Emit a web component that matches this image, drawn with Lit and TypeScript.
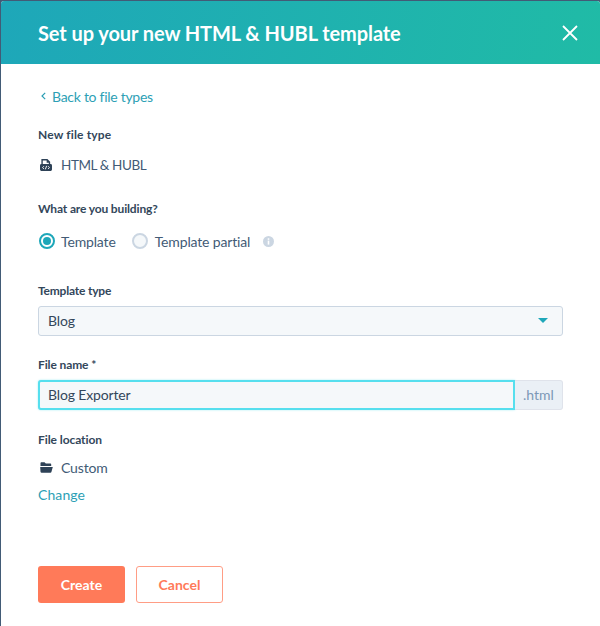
import { LitElement, html, css } from "lit";
import { customElement } from "lit/decorators.js";

@customElement("app-root")
export class AppRoot extends LitElement {
  static styles = css`
    :host { display: block; width: 600px; height: 626px; background: #425b76; font-family: Lato, "Open Sans", sans-serif; color: #33475b; overflow: hidden; }
    * { box-sizing: border-box; }
    .modal { margin: 1px 0 0 1px; height: 625px; background: #fff; border-radius: 3px 3px 0 0; display: flex; flex-direction: column; overflow: hidden; }
    .head { height: 63px; flex: none; background: linear-gradient(100deg, #1ea7b9 0%, #20bba6 100%); display: flex; align-items: center; justify-content: space-between; padding: 0 22px 0 37px; color: #fff; }
    h1 { margin: 0; font-size: 20px; font-weight: 700; line-height: 26px; letter-spacing: -0.08px; }
    .close { display: block; }
    .body { padding: 0 37px; display: flex; flex-direction: column; flex: 1; }
    .back { margin-top: 22px; height: 20px; display: flex; align-items: center; gap: 6px; color: #2d9fb5; font-size: 14px; letter-spacing: -0.28px; padding-left: 3px; }
    .label { font-size: 12px; font-weight: 700; line-height: 16px; color: #33475b; }
    .l1 { margin-top: 21px; letter-spacing: 0.15px; }
    .icon-row { display: flex; align-items: center; height: 20px; font-size: 14px; letter-spacing: -0.15px; color: #425b76; padding-left: 2px; }
    .r1 { margin-top: 12px; gap: 9px; }
    .r1 span { font-size: 13.5px; letter-spacing: -0.4px; }
    .l2 { margin-top: 26px; letter-spacing: -0.15px; }
    .radios { margin-top: 14px; height: 20px; display: flex; align-items: center; font-size: 14px; letter-spacing: -0.15px; color: #425b76; }
    .radio { width: 16px; height: 16px; border-radius: 50%; border: 2px solid #cbd6e2; background: #f5f8fa; margin-right: 7px; display: flex; align-items: center; justify-content: center; flex: none; }
    .radio.on { border-color: #1ea7b9; background: #fff; margin-left: 1px; margin-right: 6px; }
    .radio.on::after { content: ""; width: 8px; height: 8px; border-radius: 50%; background: #1ea7b9; }
    .second { margin-left: 16px; }
    .info { margin-left: 13px; display: block; }
    .l3 { margin-top: 32px; letter-spacing: -0.2px; }
    .select { margin-top: 7px; width: 525px; height: 30px; border: 1px solid #cbd6e2; border-radius: 3px; background: #f5f8fa; display: flex; align-items: center; justify-content: space-between; padding: 0 14px 1px 9px; font-size: 14px; letter-spacing: -0.15px; color: #33475b; }
    .caret { width: 0; height: 0; border-left: 5px solid transparent; border-right: 5px solid transparent; border-top: 5px solid #1ea7b9; }
    .l4 { margin-top: 21px; letter-spacing: -0.12px; }
    .group { margin-top: 7px; width: 525px; height: 30px; display: flex; }
    .input { flex: 1; border: 2px solid #56dfee; border-radius: 3px 0 0 3px; background: #f5f8fa; display: flex; align-items: center; padding: 0 0 1px 8px; font-size: 14px; letter-spacing: -0.15px; color: #33475b; box-shadow: 0 0 2px rgba(86,223,238,.6); }
    .suffix { width: 48px; background: #eaf0f6; border: 1px solid #dfe3eb; border-left: 0; border-radius: 0 3px 3px 0; display: flex; align-items: center; justify-content: center; font-size: 14px; letter-spacing: 0; color: #7c98b6; padding-bottom: 1px; }
    .l5 { margin-top: 22px; letter-spacing: -0.08px; }
    .r5 { margin-top: 9px; gap: 8px; }
    .change { margin-top: 8px; font-size: 14px; line-height: 20px; letter-spacing: 0.1px; color: #2d9fb5; }
    .actions { margin-top: 61px; display: flex; gap: 11px; }
    .btn { height: 37px; width: 87px; border-radius: 3px; display: flex; align-items: center; justify-content: center; padding-bottom: 1px; font-size: 14px; font-weight: 700; letter-spacing: 0; }
    .primary { background: #ff7a59; color: #fff; }
    .secondary { background: #fff; border: 1px solid #ff9d85; color: #ff7a59; }
  `;

  render() {
    return html`<div class="modal">
      <div class="head">
        <h1>Set up your new HTML &amp; HUBL template</h1>
        <svg class="close" width="16" height="16" viewBox="0 0 16 16" fill="none" stroke="#fff" stroke-width="1.8"><path d="M1 1l14 14M15 1L1 15"/></svg>
      </div>
      <div class="body">
        <div class="back">
          <svg width="5" height="8" viewBox="0 0 5 8" fill="none" stroke="#2d9fb5" stroke-width="1.2"><path d="M4.2.8L1 4l3.2 3.2"/></svg>
          <span>Back to file types</span>
        </div>
        <div class="label l1">New file type</div>
        <div class="icon-row r1">
          <svg width="12" height="12" viewBox="0 0 13 13"><path fill="#2e4257" d="M1.5 0H8l3 3v2.5h.5A1.5 1.5 0 0 1 13 7v4.5A1.5 1.5 0 0 1 11.5 13h-10A1.5 1.5 0 0 1 0 11.5V7a1.5 1.5 0 0 1 1.5-1.5V0zM3 1.5v4h6.5V4H7.2V1.5H3z"/><path fill="none" stroke="#fff" stroke-width="1" d="M4.2 7.8L2.8 9.3l1.4 1.5M8.8 7.8l1.4 1.5-1.4 1.5M7.2 7.4L5.8 11.2"/></svg>
          <span>HTML &amp; HUBL</span>
        </div>
        <div class="label l2">What are you building?</div>
        <div class="radios">
          <span class="radio on"></span><span>Template</span>
          <span class="radio second"></span><span>Template partial</span>
          <svg class="info" width="11" height="11" viewBox="0 0 11 11"><circle cx="5.5" cy="5.5" r="5.5" fill="#cbd6e2"/><rect x="4.7" y="4.6" width="1.6" height="4" fill="#fff"/><rect x="4.7" y="2.3" width="1.6" height="1.5" fill="#fff"/></svg>
        </div>
        <div class="label l3">Template type</div>
        <div class="select"><span>Blog</span><span class="caret"></span></div>
        <div class="label l4">File name *</div>
        <div class="group"><div class="input">Blog Exporter</div><div class="suffix">.html</div></div>
        <div class="label l5">File location</div>
        <div class="icon-row r5">
          <svg width="13" height="11" viewBox="0 0 13 11"><path fill="#2e4257" d="M.5 4V1.2C.5.6 1 .2 1.5.2h3l1.3 1.3h4.4c.6 0 1 .4 1 1V4H.5z"/><path fill="#2e4257" d="M.2 5h12.6l-1.4 5c-.1.5-.5.8-1 .8H1.6c-.6 0-1-.4-1.1-1L.2 5z"/></svg>
          <span>Custom</span>
        </div>
        <div class="change">Change</div>
        <div class="actions">
          <div class="btn primary">Create</div>
          <div class="btn secondary">Cancel</div>
        </div>
      </div>
    </div>`;
  }
}
